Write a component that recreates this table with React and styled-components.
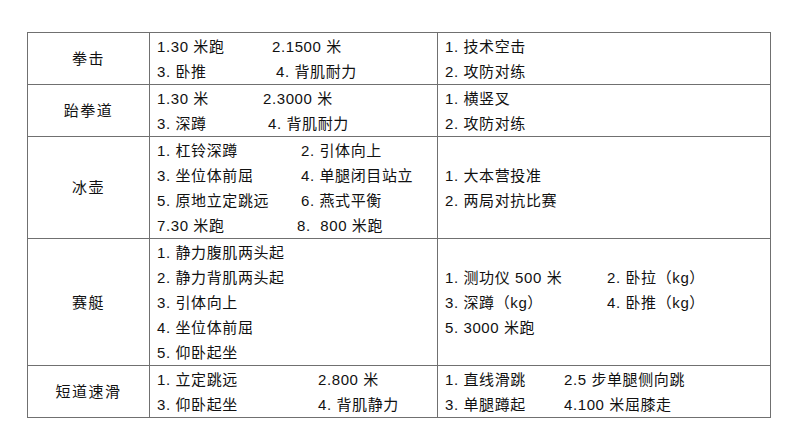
import React from "react";
import styled, { createGlobalStyle } from "styled-components";

const GlobalStyle = createGlobalStyle`
	html, body {
		margin: 0;
		padding: 0;
		background: #fff;
	}
	body {
		font-family: "Liberation Sans", "Noto Sans CJK SC", sans-serif;
		color: #111;
	}
`;

const rows = [
	{
		sport: "拳击",
		tests: [
			{ items: ["1.30 米跑", "2.1500 米"], tab: 115 },
			{ items: ["3. 卧推", "4. 背肌耐力"], tab: 119 },
		],
		skills: [{ items: ["1. 技术空击"] }, { items: ["2. 攻防对练"] }],
	},
	{
		sport: "跆拳道",
		tests: [
			{ items: ["1.30 米", "2.3000 米"], tab: 106 },
			{ items: ["3. 深蹲", "4. 背肌耐力"], tab: 111 },
		],
		skills: [{ items: ["1. 横竖叉"] }, { items: ["2. 攻防对练"] }],
	},
	{
		sport: "冰壶",
		tests: [
			{ items: ["1. 杠铃深蹲", "2. 引体向上"], tab: 144 },
			{ items: ["3. 坐位体前屈", "4. 单腿闭目站立"], tab: 144 },
			{ items: ["5. 原地立定跳远", "6. 燕式平衡"], tab: 144 },
			{ items: ["7.30 米跑", "8.  800 米跑"], tab: 140 },
		],
		skills: [{ items: ["1. 大本营投准"] }, { items: ["2. 两局对抗比赛"] }],
	},
	{
		sport: "赛艇",
		tests: [
			{ items: ["1. 静力腹肌两头起"] },
			{ items: ["2. 静力背肌两头起"] },
			{ items: ["3. 引体向上"] },
			{ items: ["4. 坐位体前屈"] },
			{ items: ["5. 仰卧起坐"] },
		],
		skills: [
			{ items: ["1. 测功仪 500 米", "2. 卧拉（kg）"], tab: 162 },
			{ items: ["3. 深蹲（kg）", "4. 卧推（kg）"], tab: 162 },
			{ items: ["5. 3000 米跑"] },
		],
	},
	{
		sport: "短道速滑",
		tests: [
			{ items: ["1. 立定跳远", "2.800 米"], tab: 161 },
			{ items: ["3. 仰卧起坐", "4. 背肌静力"], tab: 161 },
		],
		skills: [
			{ items: ["1. 直线滑跳", "2.5 步单腿侧向跳"], tab: 119 },
			{ items: ["3. 单腿蹲起", "4.100 米屈膝走"], tab: 119 },
		],
	},
];

const Page = styled.div`
	padding: 32px 0 0 27px;
`;

const Table = styled.table`
	border-collapse: collapse;
	table-layout: fixed;
	width: 743px;
	font-size: 15px;
	letter-spacing: 0.6px;
`;

const Col = styled.col`
	width: ${(p) => p.$w}px;
`;

const Cell = styled.td`
	border: 1.5px solid #707070;
	padding: 1px 7px 0 7px;
	vertical-align: middle;
	line-height: 25px;
`;

const SportCell = styled(Cell)`
	text-align: center;
	letter-spacing: 1.5px;
	padding: 0;
`;

const Line = styled.div`
	display: flex;
	white-space: pre;
	height: 25px;
`;

const Item = styled.span`
	display: inline-block;
	flex: none;
`;

const renderLines = (lines) =>
	lines.map((line, i) => (
		<Line key={i}>
			<Item style={line.tab ? { width: line.tab } : undefined}>
				{line.items[0]}
			</Item>
			{line.items[1] && <Item>{line.items[1]}</Item>}
		</Line>
	));

const App = () => {
	return (
		<Page>
			<GlobalStyle />
			<Table>
				<colgroup>
					<Col $w={122} />
					<Col $w={288} />
					<Col $w={333} />
				</colgroup>
				<tbody>
					{rows.map((row) => (
						<tr key={row.sport}>
							<SportCell>{row.sport}</SportCell>
							<Cell>{renderLines(row.tests)}</Cell>
							<Cell>{renderLines(row.skills)}</Cell>
						</tr>
					))}
				</tbody>
			</Table>
		</Page>
	);
};

export default App;
